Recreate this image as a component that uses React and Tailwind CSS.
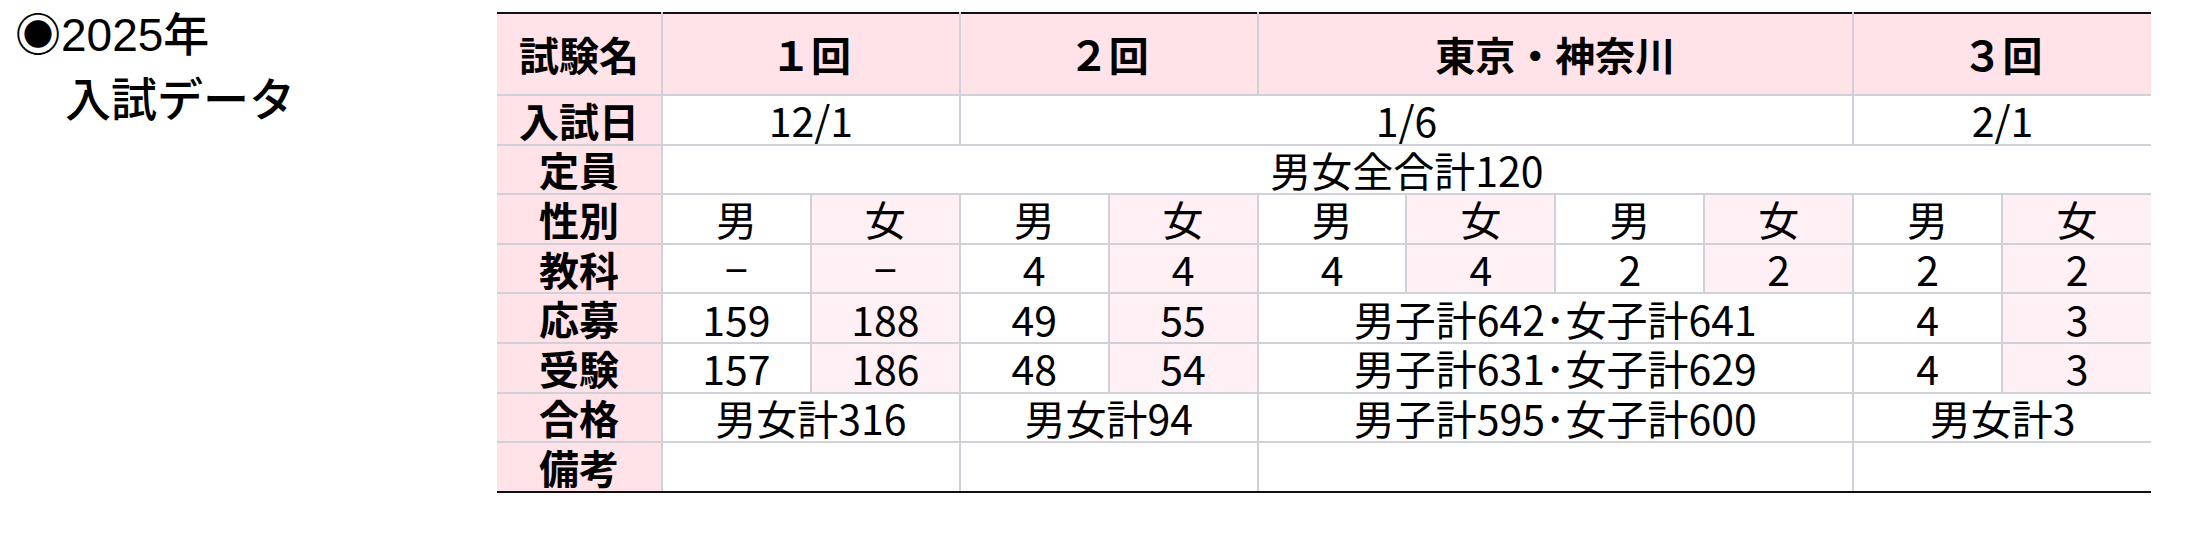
const cell = "border-2 border-[#cfd0d8] text-center align-middle leading-none p-0";
const head = "border-2 border-[#cfd0d8] border-l-0 bg-[#ffe3e8] text-center align-middle leading-none p-0 font-['Noto_Sans_CJK_JP',sans-serif] text-[40px] font-bold";
const fem = "bg-[#fff0f6]";

function Row({ name, children }) {
  return (
    <tr className="h-[49.6px]">
      <td className={head}>{name}</td>
      {children}
    </tr>
  );
}

function Pairs({ values }) {
  return values.map((v, i) => (
    <td key={i} className={i % 2 === 1 ? `${cell} ${fem}` : cell}>
      {v}
    </td>
  ));
}

export default function App() {
  return (
    <div className="flex w-[2210px] h-[560px] bg-white text-black">
      <div className="w-[497px] shrink-0 pl-[15px] pt-[3px] font-['Liberation_Sans','Noto_Sans_CJK_JP',sans-serif] text-[46px] font-medium leading-[65px]">
        <div>◉2025年</div>
        <div className="pl-[50px]">入試データ</div>
      </div>

      <div className="pt-[12px]">
        <table className="w-[1654px] table-fixed border-collapse font-['Noto_Sans_CJK_JP',sans-serif] text-[41px] [&_td:last-child]:border-r-0">
          <colgroup>
            <col className="w-[165px]" />
            {Array.from({ length: 10 }).map((_, i) => (
              <col key={i} />
            ))}
          </colgroup>
          <tbody>
            <tr className="h-[82px]">
              <td className={`${head} border-t-[#111]`}>試験名</td>
              <td colSpan={2} className={`${head} border-t-[#111]`}>１回</td>
              <td colSpan={2} className={`${head} border-t-[#111]`}>２回</td>
              <td colSpan={4} className={`${head} border-t-[#111]`}>東京・神奈川</td>
              <td colSpan={2} className={`${head} border-t-[#111]`}>３回</td>
            </tr>
            <Row name="入試日">
              <td colSpan={2} className={cell}>12/1</td>
              <td colSpan={6} className={cell}>1/6</td>
              <td colSpan={2} className={cell}>2/1</td>
            </Row>
            <Row name="定員">
              <td colSpan={10} className={cell}>男女全合計120</td>
            </Row>
            <Row name="性別">
              <Pairs values={["男", "女", "男", "女", "男", "女", "男", "女", "男", "女"]} />
            </Row>
            <Row name="教科">
              <Pairs values={["−", "−", "4", "4", "4", "4", "2", "2", "2", "2"]} />
            </Row>
            <Row name="応募">
              <Pairs values={["159", "188", "49", "55"]} />
              <td colSpan={4} className={cell}>男子計642･女子計641</td>
              <Pairs values={["4", "3"]} />
            </Row>
            <Row name="受験">
              <Pairs values={["157", "186", "48", "54"]} />
              <td colSpan={4} className={cell}>男子計631･女子計629</td>
              <Pairs values={["4", "3"]} />
            </Row>
            <Row name="合格">
              <td colSpan={2} className={cell}>男女計316</td>
              <td colSpan={2} className={cell}>男女計94</td>
              <td colSpan={4} className={cell}>男子計595･女子計600</td>
              <td colSpan={2} className={cell}>男女計3</td>
            </Row>
            <tr className="h-[49.6px]">
              <td className={`${head} border-b-[#111]`}>備考</td>
              <td colSpan={2} className={`${cell} border-b-[#111]`}></td>
              <td colSpan={2} className={`${cell} border-b-[#111]`}></td>
              <td colSpan={4} className={`${cell} border-b-[#111]`}></td>
              <td colSpan={2} className={`${cell} border-b-[#111]`}></td>
            </tr>
          </tbody>
        </table>
      </div>
    </div>
  );
}
